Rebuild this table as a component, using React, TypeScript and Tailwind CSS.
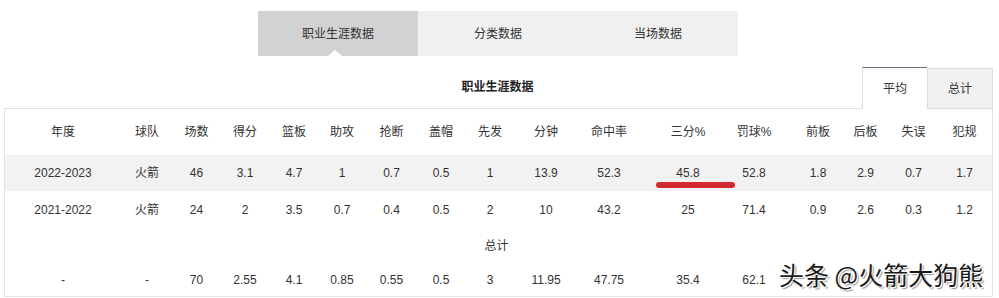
import React from "react";

const FONT = { fontFamily: '"Liberation Sans", "Noto Sans CJK SC", sans-serif' };

const headers = ["年度", "球队", "场数", "得分", "篮板", "助攻", "抢断", "盖帽", "先发", "分钟", "命中率", "三分%", "罚球%", "前板", "后板", "失误", "犯规"];
const row1 = ["2022-2023", "火箭", "46", "3.1", "4.7", "1", "0.7", "0.5", "1", "13.9", "52.3", "45.8", "52.8", "1.8", "2.9", "0.7", "1.7"];
const row2 = ["2021-2022", "火箭", "24", "2", "3.5", "0.7", "0.4", "0.5", "2", "10", "43.2", "25", "71.4", "0.9", "2.6", "0.3", "1.2"];
const total = ["-", "-", "70", "2.55", "4.1", "0.85", "0.55", "0.5", "3", "11.95", "47.75", "35.4", "62.1", "", "", "", ""];

const GRID = "grid grid-cols-[116px_52px_47px_50px_48px_48px_51px_48px_50px_62px_64px_94px_38px_69px_47px_49px_53px] items-center";

function Cells({ values }: { values: string[] }) {
  return (
    <>
      {values.map((v, i) => (
        <div
          key={i}
          className={
            i === 13
              ? "text-center whitespace-nowrap pl-[21px]"
              : "text-center whitespace-nowrap"
          }
        >
          {v}
        </div>
      ))}
    </>
  );
}

export default function App() {
  return (
    <div className="relative w-[999px] h-[298px] bg-white overflow-hidden text-[#333] text-[12px]" style={FONT}>
      {/* top tabs */}
      <div className="pt-[11px] pl-[258px] flex">
        <div className="relative w-[160px] h-[45px] bg-[#d2d2d2] flex items-center justify-center">
          职业生涯数据
          <div className="absolute bottom-0 left-[70px] w-0 h-0 border-l-[7px] border-r-[7px] border-b-[6px] border-l-transparent border-r-transparent border-b-white" />
        </div>
        <div className="w-[160px] h-[45px] bg-[#f0f0f0] flex items-center justify-center">分类数据</div>
        <div className="w-[160px] h-[45px] bg-[#f0f0f0] flex items-center justify-center">当场数据</div>
      </div>

      {/* title + avg/total tabs */}
      <div className="grid h-[52px]">
        <div className="col-start-1 row-start-1 justify-self-center self-start mt-[23px] leading-[17px] font-bold text-[#222] -translate-x-[2px]">
          职业生涯数据
        </div>
        <div className="col-start-1 row-start-1 justify-self-end self-end mr-[6px] flex relative z-10 -mb-px">
          <div className="w-[65px] h-[42px] bg-white border-l border-t border-l-[#dcdcdc] border-t-[#5f6f7e] flex items-center justify-center">
            平均
          </div>
          <div className="w-[66px] h-[41px] mt-px bg-[#f1f1f1] border-l border-t border-r border-b border-[#dcdcdc] flex items-center justify-center">
            总计
          </div>
        </div>
      </div>

      {/* table */}
      <div className="ml-[4px] w-[989px] border border-[#e2e2e2]">
        <div className={GRID + " h-[46px]"}>
          <Cells values={headers} />
        </div>
        <div className={GRID + " h-[36px] bg-[#f2f2f2] relative"}>
          <Cells values={row1} />
          <div className="absolute left-[651px] top-[27px] w-[79px] h-[6px] rounded-full bg-[#d42a2f]" />
        </div>
        <div className={GRID + " h-[37px]"}>
          <Cells values={row2} />
        </div>
        <div className="h-[35px] flex items-center justify-center -translate-x-[2px]">总计</div>
        <div className={GRID + " h-[33px]"}>
          <Cells values={total} />
        </div>
      </div>

      {/* watermark */}
      <div
        className="absolute left-[779px] top-[259px] text-[25px] leading-[30px] text-[#1a1a1a] whitespace-nowrap [text-shadow:1px_1px_0_#fff,-1px_-1px_0_#fff,2px_2px_1px_#999]"
        style={{ fontFamily: '"Noto Sans CJK SC", sans-serif' }}
      >
        头条 @火箭大狗熊
      </div>
    </div>
  );
}
